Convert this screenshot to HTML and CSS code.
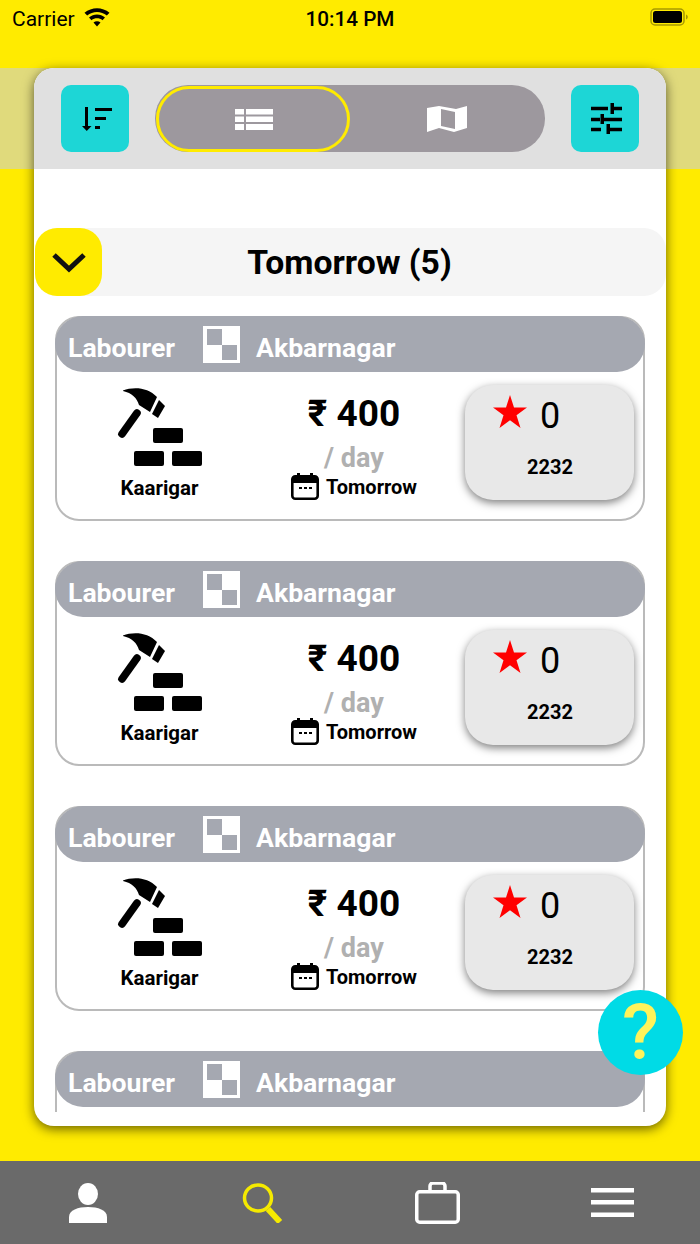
FILE: index.html
```html
<!DOCTYPE html>
<html lang="en">
<head>
<meta charset="UTF-8">
<meta name="viewport" content="width=device-width, initial-scale=1.0">
<title>Jobs</title>
<link rel="stylesheet" href="styles.css">
</head>
<body>

<svg class="defs" width="0" height="0">
  <symbol id="hammer" viewBox="0 0 86 79">
    <path d="M6 2.500C16-1.500 31-1 40 9L33 24L22 17C20 10 15 5 6 3Z"/>
    <path d="M42 12L48 18L41 30L35 26Z"/>
    <path d="M20 25L5 46" stroke="#000" stroke-width="7.500" stroke-linecap="round"/>
    <rect x="36" y="40" width="30" height="15" rx="2"/>
    <rect x="17" y="63" width="30" height="15" rx="2"/>
    <rect x="55" y="63" width="30" height="15" rx="2"/>
  </symbol>
  <symbol id="calendar" viewBox="0 0 28 27">
    <rect x="1.300" y="3.300" width="25.400" height="22.400" rx="3" fill="#fff" stroke="#000" stroke-width="2.600"/>
    <path d="M1 4h26v6H1z"/>
    <path d="M6 0h3v4H6zM19 0h3v4h-3z"/>
    <path d="M8 14h3v2H8zM13 14h3v2h-3zM18 14h3v2h-3z"/>
  </symbol>
  <symbol id="star" viewBox="0 0 34 33">
    <path d="M17 0L21 12.500H34L23.500 20.300L27.500 33L17 25.200L6.500 33L10.500 20.300L0 12.500H13Z" fill="#ff0000"/>
  </symbol>
  <symbol id="site" viewBox="0 0 37 37">
    <path d="M0 0h37v37H0z" fill="#fff"/>
    <path d="M4 3h15v16H4zM19 19h15v15H19z" fill="#a5a8b1"/>
  </symbol>
</svg>

<div class="statusbar">
  <div class="status-left">
    <span>Carrier</span>
    <svg class="wifi" width="26" height="19" viewBox="0 0 26 19">
      <path d="M13 18.500L9.500 14.500C11.500 12.800 14.500 12.800 16.500 14.500Z"/>
      <path d="M7.500 12.300L5 9.500C9.500 5.600 16.500 5.600 21 9.500L18.500 12.300C15.300 9.700 10.700 9.700 7.500 12.300Z"/>
      <path d="M3.200 7.600L.5 4.700C7.500-1.400 18.500-1.400 25.500 4.700L22.800 7.600C17.200 2.800 8.800 2.800 3.200 7.600Z"/>
    </svg>
  </div>
  <span class="status-time">10:14 PM</span>
  <svg class="battery" width="38" height="18" viewBox="0 0 38 18">
    <rect x="1" y="1" width="33" height="16" rx="4" fill="none" stroke="#a89a00" stroke-width="1.500"/>
    <rect x="3" y="3" width="29" height="12" rx="2.500" fill="#000"/>
    <path d="M36 6.500c1.200.4 1.800 1.400 1.800 2.500s-.6 2.100-1.800 2.500z" fill="#a89a00"/>
  </svg>
</div>

<div class="main">
  <div class="panel">
    <div class="toolbar">
      <button class="square-btn">
        <svg class="nudge" width="30" height="24" viewBox="0 0 30 24">
          <path d="M3 0h3v20H3z"/>
          <path d="M0 19h9.500l-4.750 5z"/>
          <path d="M13 1h17v3H13zM13 10h11v3H13zM13 19h5v3h-5z"/>
        </svg>
      </button>
      <div class="view-toggle">
        <div class="view-item active">
          <svg width="38" height="21" viewBox="0 0 38 21" fill="#fff">
            <path d="M0 0h9v5.500H0zM11 0h27v5.500H11zM0 7.500h9V13H0zM11 7.500h27V13H11zM0 15h9v6H0zM11 15h27v6H11z"/>
          </svg>
        </div>
        <div class="view-item map-item">
          <svg width="40" height="26" viewBox="0 0 40 26" fill="#fff">
            <path fill-rule="evenodd" d="M0 2L12 0L29 3L40 0V22L27 26L12 22L0 26ZM14 3V20L28 23V6Z"/>
          </svg>
        </div>
      </div>
      <button class="square-btn">
        <svg class="nudge" width="31" height="31" viewBox="0 0 31 31">
          <path d="M0 3.800h17v3.400H0zM21 3.800h10v3.400H21zM19.500 0h3.500v11h-3.500zM0 14.800h9v3.400H0zM13 14.800h18v3.400H13zM9.500 11h3.500v10H9.500zM0 24.800h10v3.400H0zM16 24.800h15v3.400H16zM15.500 21h3.500v10h-3.500z"/>
        </svg>
      </button>
    </div>

    <div class="list">
      <div class="group-head">
        <div class="group-toggle">
          <svg width="36" height="22" viewBox="0 0 36 22">
            <path d="M3 4l15 14L33 4" fill="none" stroke="#111" stroke-width="5"/>
          </svg>
        </div>
        <h2>Tomorrow (5)</h2>
      </div>

      <div class="job">
        <div class="job-head">
          <span>Labourer</span>
          <svg class="job-pic" width="37" height="37"><use href="#site"/></svg>
          <span>Akbarnagar</span>
        </div>
        <div class="job-body">
          <div class="trade">
            <svg width="86" height="79"><use href="#hammer"/></svg>
            <span>Kaarigar</span>
          </div>
          <div class="pay">
            <div class="amount">₹ 400</div>
            <div class="per">/ day</div>
            <div class="when">
              <svg width="28" height="27"><use href="#calendar"/></svg>
              <span>Tomorrow</span>
            </div>
          </div>
          <div class="rating">
            <div class="rating-top">
              <svg width="34" height="33"><use href="#star"/></svg>
              <span>0</span>
            </div>
            <div class="rating-id">2232</div>
          </div>
        </div>
      </div>

      <div class="job">
        <div class="job-head">
          <span>Labourer</span>
          <svg class="job-pic" width="37" height="37"><use href="#site"/></svg>
          <span>Akbarnagar</span>
        </div>
        <div class="job-body">
          <div class="trade">
            <svg width="86" height="79"><use href="#hammer"/></svg>
            <span>Kaarigar</span>
          </div>
          <div class="pay">
            <div class="amount">₹ 400</div>
            <div class="per">/ day</div>
            <div class="when">
              <svg width="28" height="27"><use href="#calendar"/></svg>
              <span>Tomorrow</span>
            </div>
          </div>
          <div class="rating">
            <div class="rating-top">
              <svg width="34" height="33"><use href="#star"/></svg>
              <span>0</span>
            </div>
            <div class="rating-id">2232</div>
          </div>
        </div>
      </div>

      <div class="job">
        <div class="job-head">
          <span>Labourer</span>
          <svg class="job-pic" width="37" height="37"><use href="#site"/></svg>
          <span>Akbarnagar</span>
        </div>
        <div class="job-body">
          <div class="trade">
            <svg width="86" height="79"><use href="#hammer"/></svg>
            <span>Kaarigar</span>
          </div>
          <div class="pay">
            <div class="amount">₹ 400</div>
            <div class="per">/ day</div>
            <div class="when">
              <svg width="28" height="27"><use href="#calendar"/></svg>
              <span>Tomorrow</span>
            </div>
          </div>
          <div class="rating">
            <div class="rating-top">
              <svg width="34" height="33"><use href="#star"/></svg>
              <span>0</span>
            </div>
            <div class="rating-id">2232</div>
          </div>
        </div>
      </div>

      <div class="job">
        <div class="job-head">
          <span>Labourer</span>
          <svg class="job-pic" width="37" height="37"><use href="#site"/></svg>
          <span>Akbarnagar</span>
        </div>
      </div>
    </div>
  </div>

  <button class="help-btn">?</button>
</div>

<nav class="tabbar">
  <svg width="38" height="40" viewBox="0 0 38 40" fill="#fff">
    <ellipse cx="19" cy="11" rx="10" ry="11"/>
    <path d="M0 40V34C0 27 9 24 19 24S38 27 38 34V40Z"/>
  </svg>
  <svg width="41" height="40" viewBox="0 0 41 40" fill="none" stroke="#f5ea00">
    <ellipse cx="16" cy="15" rx="13.500" ry="13" stroke-width="3.500"/>
    <path d="M26 26L38 39" stroke-width="6"/>
  </svg>
  <svg width="45" height="42" viewBox="0 0 45 42" fill="none" stroke="#fff" stroke-width="3.500">
    <rect x="1.750" y="9.750" width="41.500" height="30.500" rx="3"/>
    <path d="M15 9V4a3 3 0 0 1 3-3h9a3 3 0 0 1 3 3v5"/>
  </svg>
  <svg width="43" height="29" viewBox="0 0 43 29" fill="#fff">
    <path d="M0 0h43v4.500H0zM0 12h43v4.500H0zM0 24.500h43V29H0z"/>
  </svg>
</nav>

</body>
</html>
```

FILE: styles.css
```css
*{box-sizing:border-box;}
body{
  margin:0;
  height:1244px;
  overflow:hidden;
  display:flex;
  flex-direction:column;
  background:#ffeb00;
  color:#000;
  font-family:Roboto, "Liberation Sans", sans-serif;
}
button{border:none;padding:0;font-family:inherit;}
svg{display:block;flex:none;}
.defs{position:absolute;}

.statusbar{
  height:68px;
  flex:none;
  display:grid;
  grid-template-columns:1fr auto 1fr;
  align-items:start;
  padding:8px 12px 0;
  font-size:21px;
  line-height:22px;
}
.status-left{display:flex;gap:9px;align-items:center;}
.wifi{margin-top:-3px;}
.status-time{font-weight:500;font-size:20.700px;}
.battery{justify-self:end;}

.main{
  position:relative;
  flex:1;
  min-height:0;
  padding:0 34px 35px;
  display:flex;
  background:linear-gradient(#e0da7c,#e0da7c) no-repeat 0 0/100% 101px;
}
.panel{
  flex:1;
  min-width:0;
  background:#fff;
  border-radius:20px;
  overflow:hidden;
  display:flex;
  flex-direction:column;
  box-shadow:0 3px 12px rgba(0,0,0,0.6);
}

.toolbar{
  height:101px;
  flex:none;
  background:#e0e0e0;
  display:flex;
  align-items:flex-start;
  padding:17px 27px 0;
}
.square-btn{
  width:68px;
  height:67px;
  flex:none;
  border-radius:10px;
  background:#1dd6d6;
  display:flex;
  align-items:center;
  justify-content:center;
}
.nudge{margin-left:3px;}
.view-toggle{
  width:390px;
  height:67px;
  margin:0 26px;
  background:#9d989e;
  border-radius:33px;
  display:flex;
}
.view-item{
  flex:1;
  display:flex;
  align-items:center;
  justify-content:center;
  border-radius:33px;
}
.map-item{padding-right:2px;}
.view-item.active{
  flex:none;
  width:194px;
  height:66px;
  margin:1px 0 0 1px;
  padding-left:2px;
  border:3px solid #ffeb00;
}

.list{
  flex:1;
  min-height:0;
  margin-bottom:14px;
  overflow:hidden;
  padding:59px 21px 0;
}
.group-head{
  height:68px;
  margin:0 -21px 20px -20px;
  background:#f5f5f5;
  border-radius:22px;
  display:flex;
  align-items:center;
}
.group-toggle{
  width:67px;
  height:68px;
  flex:none;
  background:#ffeb00;
  border-radius:22px;
  display:flex;
  align-items:center;
  justify-content:center;
}
.group-head h2{
  flex:1;
  margin:0 0 0 -69px;
  text-align:center;
  font-size:33.700px;
  font-weight:700;
}

.job{
  height:205px;
  margin-bottom:40px;
  border:2px solid #bababa;
  border-radius:24px;
}
.job-head{
  height:56px;
  margin:-2px -2px 0;
  padding:0 13px;
  background:#a5a8b1;
  border-radius:28px;
  display:flex;
  align-items:center;
  color:#fff;
  font-size:26.600px;
  font-weight:700;
}
.job-head span{margin-top:6px;}
.job-pic{margin:0 16px 0 28px;}
.job-body{
  display:grid;
  grid-template-columns:205px 203px 169px;
}
.trade{
  display:flex;
  flex-direction:column;
  align-items:center;
  padding-top:16px;
  font-size:20.500px;
  font-weight:700;
}
.trade span{margin-top:9px;}
.pay{
  display:flex;
  flex-direction:column;
  align-items:center;
  padding:21px 19px 0 0;
}
.amount{font-size:37px;font-weight:700;line-height:42px;}
.per{
  margin-top:7px;
  font-size:27px;
  font-weight:700;
  line-height:32px;
  color:#b0b0b0;
}
.when{
  display:flex;
  align-items:center;
  gap:7px;
  margin-top:-1px;
  font-size:20px;
  font-weight:700;
}
.rating{
  height:115px;
  margin-top:13px;
  padding:10px 0 0 28px;
  background:#e8e8e8;
  border-radius:28px;
  box-shadow:0 3px 8px rgba(0,0,0,0.5);
}
.rating-top{
  display:flex;
  gap:13px;
  font-size:36px;
  height:41px;
  line-height:41px;
}
.rating-top span{margin-top:1px;}
.rating-id{
  margin:19px 0 0 30px;
  width:54px;
  text-align:center;
  font-size:20px;
  font-weight:700;
}

.help-btn{
  position:absolute;
  right:17px;
  bottom:86px;
  width:85px;
  height:85px;
  border-radius:50%;
  background:#00dbe6;
  color:#fff35a;
  font-size:76px;
  font-weight:500;
  line-height:85px;
}

.tabbar{
  height:83px;
  flex:none;
  background:#6a6a6a;
  display:grid;
  grid-template-columns:repeat(4,1fr);
  align-items:center;
  justify-items:center;
}
```
